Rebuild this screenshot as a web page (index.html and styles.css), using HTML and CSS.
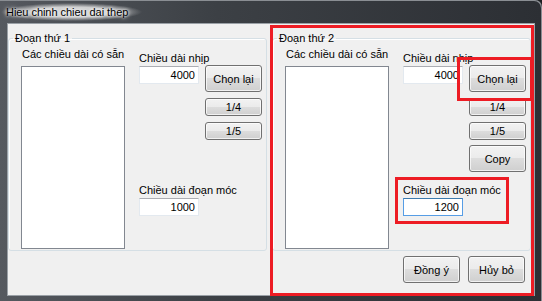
FILE: index.html
```html
<!DOCTYPE html>
<html lang="vi">
<head>
    <meta charset="UTF-8">
    <title>Hieu chinh chieu dai thep</title>
    <link rel="stylesheet" href="styles.css">
</head>
<body>
    <div class="window">
        <div class="titlebar">
            <span class="title">Hieu chinh chieu dai thep</span>
        </div>

        <div class="client">
            <div class="groups">
                <fieldset class="group">
                    <legend>Đoạn thứ 1</legend>
                    <div class="group-body">
                        <div class="list-col">
                            <div class="label">Các chiều dài có sẵn</div>
                            <div class="listbox"></div>
                        </div>
                        <div class="right-col">
                            <div class="label">Chiều dài nhịp</div>
                            <div class="row">
                                <div class="textbox">4000</div>
                                <div class="btn-stack">
                                    <button class="btn btn-tall">Chọn lại</button>
                                    <button class="btn btn-small">1/4</button>
                                    <button class="btn btn-small">1/5</button>
                                </div>
                            </div>
                            <div class="hook">
                                <div class="label">Chiều dài đoạn móc</div>
                                <div class="textbox">1000</div>
                            </div>
                        </div>
                    </div>
                </fieldset>

                <fieldset class="group">
                    <legend>Đoạn thứ 2</legend>
                    <div class="group-body">
                        <div class="list-col">
                            <div class="label">Các chiều dài có sẵn</div>
                            <div class="listbox"></div>
                        </div>
                        <div class="right-col">
                            <div class="label">Chiều dài nhịp</div>
                            <div class="row">
                                <div class="textbox">4000</div>
                                <div class="btn-stack">
                                    <button class="btn btn-tall">Chọn lại</button>
                                    <button class="btn btn-small">1/4</button>
                                    <button class="btn btn-small">1/5</button>
                                    <button class="btn btn-tall btn-copy">Copy</button>
                                </div>
                            </div>
                            <div class="hook">
                                <div class="label">Chiều dài đoạn móc</div>
                                <div class="textbox focused">1200</div>
                            </div>
                        </div>
                    </div>
                </fieldset>
            </div>

            <div class="footer">
                <button class="btn btn-tall">Đồng ý</button>
                <button class="btn btn-tall">Hủy bỏ</button>
            </div>
        </div>

        <!-- red annotation boxes drawn over the dialog -->
        <div class="mark mark-group"></div>
        <div class="mark mark-reset"></div>
        <div class="mark mark-hook"></div>
    </div>
</body>
</html>
```

FILE: styles.css
```css
body {
    margin: 0;
    background: #1c1e21;
    font-family: "Liberation Sans", Arial, sans-serif;
    font-size: 11px;
    color: #000;
}
.window {
    position: relative;
    width: 542px;
    height: 301px;
    box-sizing: border-box;
    display: flex;
    flex-direction: column;
    padding: 0 7px 5px 7px;
    background: linear-gradient(90deg, #55595f 0%, #3c4045 40%, #2c2f34 100%);
    border-radius: 0 7px 0 0;
    box-shadow: inset -1px 1px 0 #8a8e93;
}
.titlebar {
    height: 23px;
    display: flex;
    align-items: center;
    margin-left: -6px;
}
.title {
    font-family: "Liberation Sans", Arial, sans-serif;
    font-size: 11px;
    letter-spacing: -0.05px;
    color: #000;
    padding: 3px 14px 3px 5px;
    background: radial-gradient(closest-side, rgba(230,230,230,0.85) 55%, rgba(230,230,230,0) 100%);
    text-shadow: 0 0 5px #fff, 0 0 3px #fff;
}
.client {
    flex: 1;
    background: #f0f0f0;
    border: 1px solid #9aa0a6;
    display: flex;
    flex-direction: column;
}
.groups {
    display: flex;
    gap: 5px;
    padding: 8px 0 0 0;
}
.group {
    margin: 0;
    padding: 0;
    width: 259px;
    height: 219px;
    box-sizing: border-box;
    border: 1px solid #d5dfe5;
    border-radius: 3px;
    box-shadow: inset 1px 1px 0 #fff;
}
.group legend {
    margin-left: 4px;
    padding: 0 2px;
    line-height: 13px;
}
.group-body {
    display: flex;
    gap: 14px;
    padding: 3px 0 0 12px;
}
.label {
    line-height: 13px;
    white-space: nowrap;
}
.list-col .label {
    padding-left: 1px;
}
.listbox {
    margin-top: 5px;
    width: 104px;
    height: 183px;
    box-sizing: border-box;
    background: #fff;
    border: 1px solid #828790;
}
.right-col {
    display: flex;
    flex-direction: column;
    height: 196px;
    padding-top: 4px;
}
.row {
    display: flex;
    gap: 6px;
    align-items: flex-start;
}
.textbox {
    margin-top: 1px;
    width: 60px;
    height: 18px;
    box-sizing: border-box;
    background: #fff;
    border: 1px solid #e3e9ef;
    border-top-color: #abadb3;
    text-align: right;
    line-height: 16px;
    padding-right: 3px;
}
.textbox.focused {
    border-color: #569de5;
    border-top-color: #3d7bad;
}
.btn-stack {
    display: flex;
    flex-direction: column;
    gap: 6px;
}
.btn {
    width: 57px;
    font-family: inherit;
    font-size: 11px;
    color: #000;
    border: 1px solid #707070;
    border-radius: 3px;
    padding: 0;
    background: linear-gradient(#f2f2f2 0%, #ebebeb 49%, #dddddd 50%, #cfcfcf 100%);
    box-shadow: inset 0 0 0 1px rgba(255,255,255,0.7);
}
.btn-tall {
    height: 27px;
}
.btn-small {
    height: 18px;
}
.btn-copy {
    margin-top: -1px;
}
.hook {
    margin-top: auto;
    margin-bottom: 32px;
}
.footer {
    display: flex;
    justify-content: flex-end;
    gap: 8px;
    padding: 5px 9px 0 0;
}
.mark {
    position: absolute;
    border: 3px solid #ed1c24;
    box-sizing: border-box;
}
.mark-group {
    left: 270px;
    top: 25px;
    width: 264px;
    height: 271px;
}
.mark-reset {
    left: 457px;
    top: 57px;
    width: 76px;
    height: 44px;
}
.mark-hook {
    left: 395px;
    top: 177px;
    width: 114px;
    height: 47px;
}
```
